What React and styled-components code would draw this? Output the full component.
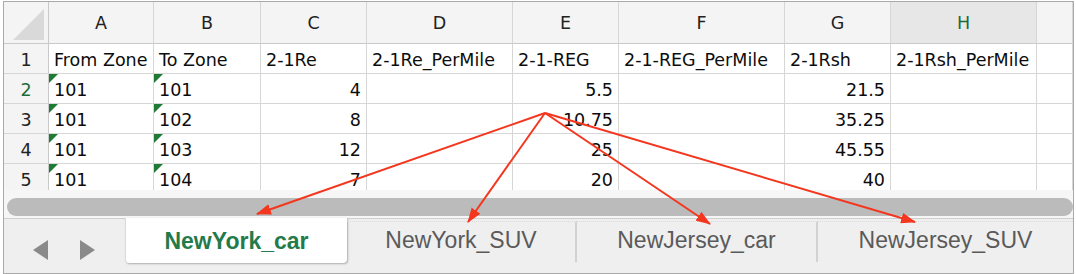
import React from "react";
import styled, { createGlobalStyle } from "styled-components";

const GlobalStyle = createGlobalStyle`
  html, body {
    margin: 0;
    padding: 0;
    background: #fff;
  }
`;

const Page = styled.div`
  position: relative;
  width: 1076px;
  height: 274px;
  overflow: hidden;
`;

const Frame = styled.div`
  margin: 1px 0 0 3px;
  width: 1069px;
  height: 271px;
  border: 1px solid #a9a9a9;
  display: flex;
  flex-direction: column;
  background: #fff;
`;

const Sheet = styled.div`
  display: grid;
  grid-template-columns: 45px 105px 107px 106px 146px 106px 166px 106px 146px 1fr;
  grid-template-rows: 42px;
  grid-auto-rows: 30px;
  height: 188px;
  overflow: hidden;
  font-family: "DejaVu Sans", sans-serif;
  font-size: 17.5px;
  color: #0c0c0c;
`;

const Corner = styled.div`
  position: relative;
  background: #f4f4f4;
  border-right: 1px solid #c9c9c9;
  border-bottom: 1px solid #c9c9c9;

  svg {
    position: absolute;
    left: 9px;
    top: 7px;
  }
`;

const ColHead = styled.div`
  display: flex;
  align-items: center;
  justify-content: center;
  background: ${(p) => (p.$selected ? "#e7e7e7" : "#f4f4f4")};
  color: ${(p) => (p.$selected ? "#1d6b38" : "#222")};
  border-right: 1px solid #d6d6d6;
  border-bottom: 1px solid #c9c9c9;
`;

const RowHead = styled.div`
  display: flex;
  align-items: center;
  justify-content: center;
  padding-top: 3px;
  background: #f4f4f4;
  color: ${(p) => (p.$selected ? "#1d6b38" : "#222")};
  border-right: 1px solid #c9c9c9;
  border-bottom: 1px solid #d6d6d6;
`;

const Cell = styled.div`
  position: relative;
  display: flex;
  align-items: center;
  justify-content: ${(p) => (p.$num ? "flex-end" : "flex-start")};
  padding: 3px 5px 0 5px;
  white-space: nowrap;
  overflow: hidden;
  border-right: 1px solid #d6d6d6;
  border-bottom: 1px solid #d6d6d6;

  ${(p) =>
    p.$flag &&
    `
    &::before {
      content: "";
      position: absolute;
      left: 0;
      top: 0;
      border-top: 9px solid #1f7a36;
      border-right: 9px solid transparent;
    }
  `}
`;

const ScrollStrip = styled.div`
  height: 28px;
  background: #f6f6f6;
  display: flex;
  align-items: center;
  padding: 0 0 0 3px;
`;

const ScrollThumb = styled.div`
  flex: 1;
  height: 18px;
  margin-top: 5px;
  border-radius: 9px;
  background: #bbbbbb;
`;

const TabBar = styled.div`
  flex: 1;
  display: flex;
  background: #efefef;
  border-top: 1px solid #cfcfcf;
  font-family: "Liberation Sans", Arial, sans-serif;
  font-size: 23px;
`;

const Nav = styled.div`
  width: 121px;
  display: flex;
  align-items: center;
  gap: 32px;
  padding: 8px 0 0 29px;
  box-sizing: border-box;
`;

const Tab = styled.div`
  width: ${(p) => p.$w}px;
  box-sizing: border-box;
  display: flex;
  align-items: center;
  justify-content: center;
  ${(p) =>
    p.$active
      ? `
    height: 45px;
    margin-top: -1px;
    background: #fff;
    color: #237a4a;
    font-weight: bold;
    border-left: 1px solid #dadada;
    border-radius: 0 0 4px 4px;
    box-shadow: 1px 1px 2px rgba(0, 0, 0, 0.28);
    padding-top: 1px;
  `
      : `
    color: #5a5a5a;
    margin-top: 2px;
    height: 41px;
    border-top: 1px dotted #dadada;
    border-right: 2px solid #d2d2d2;
    padding-bottom: 4px;
    &:last-child { border-right: none; }
  `}
`;

const Overlay = styled.svg`
  position: absolute;
  left: 0;
  top: 0;
  pointer-events: none;
`;

const columns = ["A", "B", "C", "D", "E", "F", "G", "H", ""];

const rows = [
  ["From Zone", "To Zone", "2-1Re", "2-1Re_PerMile", "2-1-REG", "2-1-REG_PerMile", "2-1Rsh", "2-1Rsh_PerMile", ""],
  ["101", "101", "4", "", "5.5", "", "21.5", "", ""],
  ["101", "102", "8", "", "10.75", "", "35.25", "", ""],
  ["101", "103", "12", "", "25", "", "45.55", "", ""],
  ["101", "104", "7", "", "20", "", "40", "", ""],
];

const tabs = [
  { name: "NewYork_car", w: 222, active: true },
  { name: "NewYork_SUV", w: 230 },
  { name: "NewJersey_car", w: 241 },
  { name: "NewJersey_SUV", w: 255 },
];

const origin = [545, 113];
const tips = [
  [257, 214],
  [468, 222],
  [710, 224],
  [915, 222],
];

const App = () => {
  return (
    <Page>
      <GlobalStyle />
      <Frame>
        <Sheet>
          <Corner>
            <svg width="31" height="31" viewBox="0 0 31 31">
              <polygon points="0,31 31,0 31,31" fill="#d9d9d9" />
            </svg>
          </Corner>
          {columns.map((c, i) => (
            <ColHead key={i} $selected={c === "H"}>
              {c}
            </ColHead>
          ))}
          {rows.map((r, ri) => (
            <React.Fragment key={ri}>
              <RowHead $selected={ri === 1}>{ri + 1}</RowHead>
              {r.map((v, ci) => (
                <Cell
                  key={ci}
                  $num={ri > 0 && ci > 1}
                  $flag={ri > 0 && ci < 2}
                >
                  {v}
                </Cell>
              ))}
            </React.Fragment>
          ))}
        </Sheet>
        <ScrollStrip>
          <ScrollThumb />
        </ScrollStrip>
        <TabBar>
          <Nav>
            <svg width="15" height="20" viewBox="0 0 15 20">
              <polygon points="15,0 15,20 0,10" fill="#8a8a8a" />
            </svg>
            <svg width="15" height="20" viewBox="0 0 15 20">
              <polygon points="0,0 0,20 15,10" fill="#8a8a8a" />
            </svg>
          </Nav>
          {tabs.map((t) => (
            <Tab key={t.name} $w={t.w} $active={t.active}>
              {t.name}
            </Tab>
          ))}
        </TabBar>
      </Frame>
      <Overlay width="1076" height="274" viewBox="0 0 1076 274">
        <defs>
          <marker
            id="head"
            viewBox="0 0 14 10"
            refX="13"
            refY="5"
            markerWidth="7.5"
            markerHeight="5.5"
            markerUnits="strokeWidth"
            orient="auto"
          >
            <path d="M0,0 L14,5 L0,10 z" fill="#f4361f" />
          </marker>
        </defs>
        {tips.map(([x, y], i) => (
          <line
            key={i}
            x1={origin[0]}
            y1={origin[1]}
            x2={x}
            y2={y}
            stroke="#f4361f"
            strokeWidth="2"
            markerEnd="url(#head)"
          />
        ))}
      </Overlay>
    </Page>
  );
};

export default App;
